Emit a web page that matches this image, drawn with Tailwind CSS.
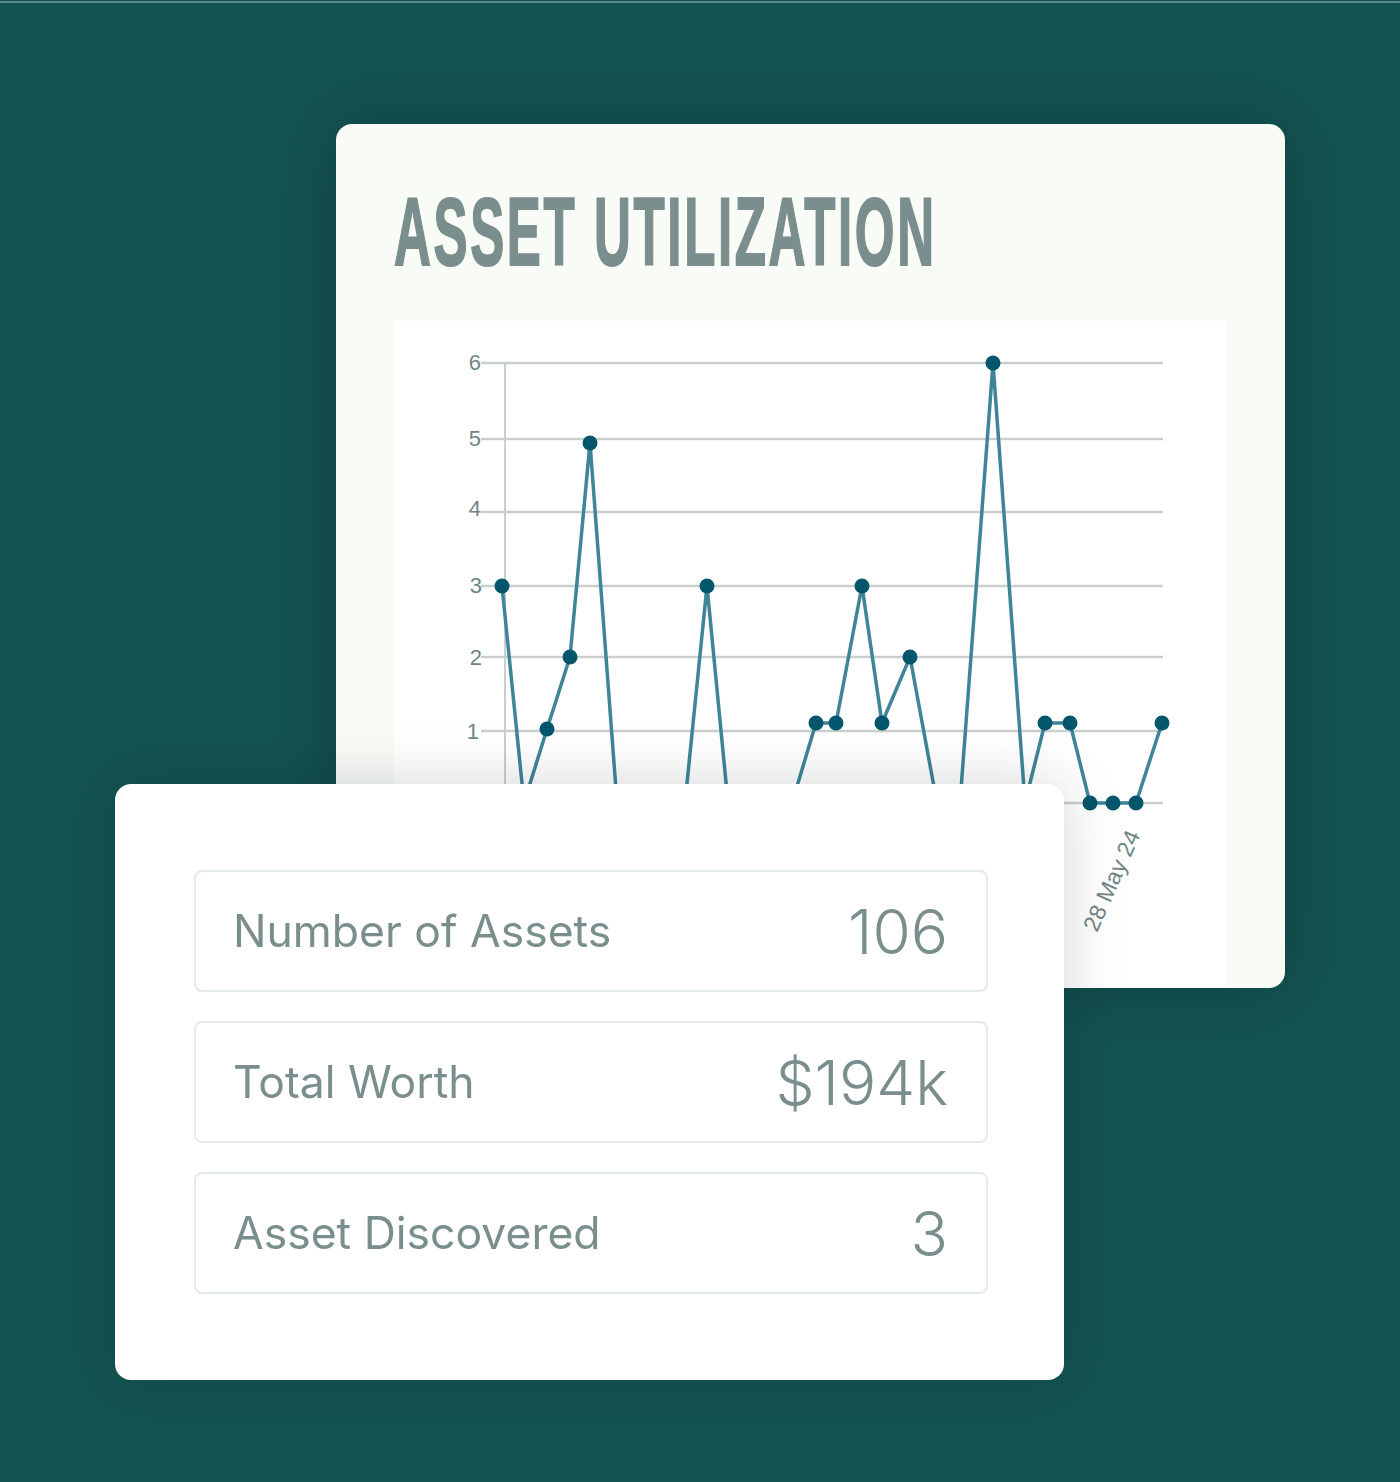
<!DOCTYPE html>
<html lang="en">
<head>
    <meta charset="UTF-8">
    <meta name="viewport" content="width=device-width, initial-scale=1.0">
    <title>Asset Utilization</title>
    <script src="https://cdn.jsdelivr.net/npm/@tailwindcss/browser@4"></script>
</head>
<body class="bg-[#135352] font-['Inter',sans-serif] text-[#7a8e8d]">
    <div class="w-[1400px] h-[1482px] overflow-hidden blur-[0.5px]">
        <div class="mt-px h-[2px] bg-[#5f8886]"></div>
        <!-- chart card -->
        <div class="mt-[121px] ml-[336px] w-[949px] h-[864px] rounded-2xl bg-[#f9fbf7] pl-[58px] pr-[59px] flex flex-col shadow-[0_0_70px_rgba(0,0,0,0.22)]">
            <div class="h-[197px] shrink-0 pt-[53px]">
                <h1 class="font-['Liberation_Sans',sans-serif] font-bold text-[97px] leading-[110px] tracking-[5px] [-webkit-text-stroke:2px_#7a8e8d] origin-left scale-x-[0.526] whitespace-nowrap">ASSET UTILIZATION</h1>
            </div>
            <div class="flex-1 bg-white">
                <svg class="w-[832px] h-[667px]" viewBox="394 321 832 667" font-family="Liberation Sans, sans-serif" font-size="22" fill="#6f8585">
                    <g stroke="#c9cfcf" stroke-width="2.5">
                        <path d="M481 363H1163M481 439H1163M481 512H1163M481 586H1163M481 657H1163M481 731H1163M481 803H1163" />
                        <path d="M505 363V803" stroke-width="2" />
                    </g>
                    <g text-anchor="end">
                        <text x="481" y="370">6</text>
                        <text x="481" y="446">5</text>
                        <text x="481" y="516">4</text>
                        <text x="482" y="593">3</text>
                        <text x="482" y="665">2</text>
                        <text x="479" y="739">1</text>
                    </g>
                    <polyline fill="none" stroke="#3f8499" stroke-width="3.5" points="502,586 524,803 547,729 570,657 590,443 617,803 685,803 707,586 728,803 792,803 816,723 836,723 862,586 882,723 910,657 937,803 960,803 993,363 1025,803 1045,723 1070,723 1090,803 1113,803 1136,803 1162,723" />
                    <g fill="#04566c">
                        <circle cx="502" cy="586" r="7.5" />
                        <circle cx="547" cy="729" r="7.5" />
                        <circle cx="570" cy="657" r="7.5" />
                        <circle cx="590" cy="443" r="7.5" />
                        <circle cx="707" cy="586" r="7.5" />
                        <circle cx="816" cy="723" r="7.5" />
                        <circle cx="836" cy="723" r="7.5" />
                        <circle cx="862" cy="586" r="7.5" />
                        <circle cx="882" cy="723" r="7.5" />
                        <circle cx="910" cy="657" r="7.5" />
                        <circle cx="993" cy="363" r="7.5" />
                        <circle cx="1045" cy="723" r="7.5" />
                        <circle cx="1070" cy="723" r="7.5" />
                        <circle cx="1090" cy="803" r="7.5" />
                        <circle cx="1113" cy="803" r="7.5" />
                        <circle cx="1136" cy="803" r="7.5" />
                        <circle cx="1162" cy="723" r="7.5" />
                    </g>
                    <text x="0" y="0" font-size="23" transform="translate(1097 933) rotate(-66)">28 May 24</text>
                </svg>
            </div>
        </div>

        <!-- stats card, overlaps the bottom of the chart -->
        <div class="relative ml-[115px] -mt-[204px] w-[949px] h-[596px] rounded-2xl bg-white pt-[86px] px-[79px] shadow-[0_0_60px_rgba(0,30,30,0.18)]">
            <div class="flex flex-col gap-[29px] w-[794px]">
                <div class="h-[122px] border-2 border-[#e2ebe7] rounded-lg pl-[37px] pr-[38px] flex items-center justify-between">
                    <span class="text-[44.5px]">Number of Assets</span>
                    <span class="text-[62px] font-[350]">106</span>
                </div>
                <div class="h-[122px] border-2 border-[#e2ebe7] rounded-lg pl-[37px] pr-[38px] flex items-center justify-between">
                    <span class="text-[44.5px]">Total Worth</span>
                    <span class="text-[62px] font-[350]">$194k</span>
                </div>
                <div class="h-[122px] border-2 border-[#e2ebe7] rounded-lg pl-[37px] pr-[38px] flex items-center justify-between">
                    <span class="text-[44.5px]">Asset Discovered</span>
                    <span class="text-[62px] font-[350]">3</span>
                </div>
            </div>
        </div>
    </div>
</body>
</html>
